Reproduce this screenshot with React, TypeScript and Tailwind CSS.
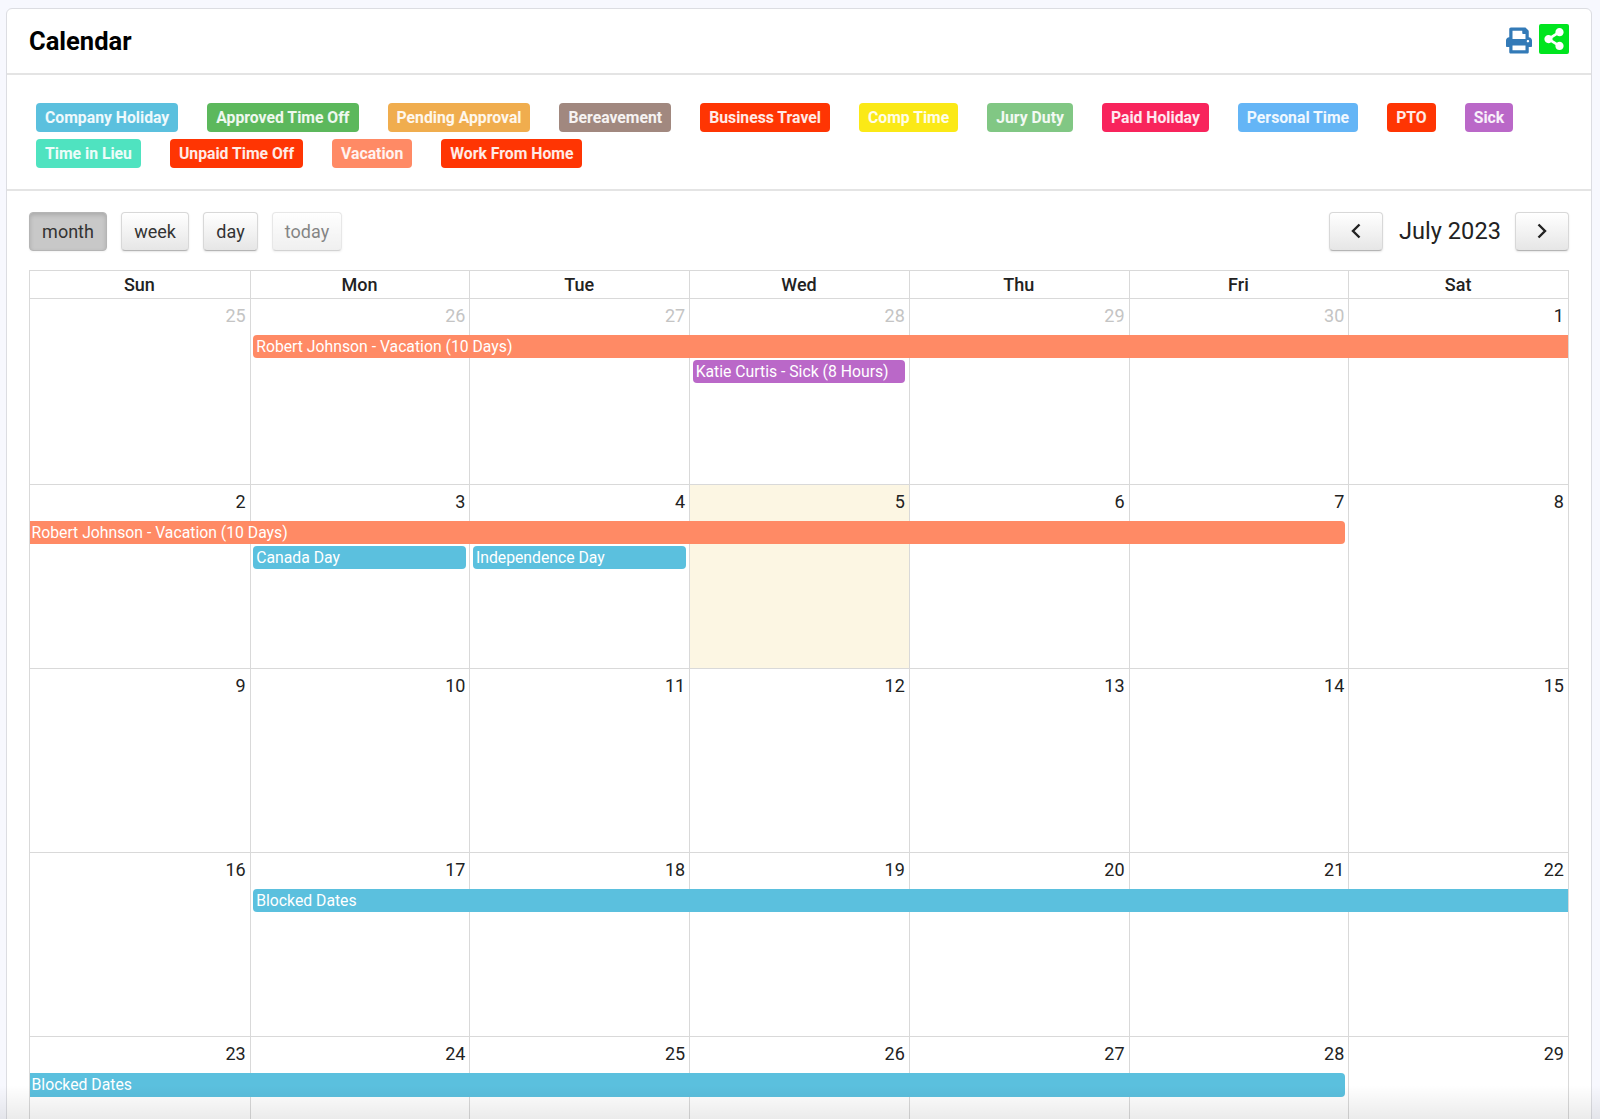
import React from "react";
import { FaPrint, FaShareAlt } from "react-icons/fa";

const legend: [string, string][] = [
  ["Company Holiday", "bg-[#5bc0de]"],
  ["Approved Time Off", "bg-[#5cb85c]"],
  ["Pending Approval", "bg-[#f0ad4e]"],
  ["Bereavement", "bg-[#a1887f]"],
  ["Business Travel", "bg-[#ff3503]"],
  ["Comp Time", "bg-[#fbe916]"],
  ["Jury Duty", "bg-[#81c784]"],
  ["Paid Holiday", "bg-[#f8245c]"],
  ["Personal Time", "bg-[#64b5f6]"],
  ["PTO", "bg-[#ff3503]"],
  ["Sick", "bg-[#ba68c8]"],
  ["Time in Lieu", "bg-[#4fe3c0]"],
  ["Unpaid Time Off", "bg-[#ff3503]"],
  ["Vacation", "bg-[#ff8a65]"],
  ["Work From Home", "bg-[#ff3503]"],
];

const days = ["Sun", "Mon", "Tue", "Wed", "Thu", "Fri", "Sat"];
const colStart = ["col-start-1", "col-start-2", "col-start-3", "col-start-4", "col-start-5", "col-start-6", "col-start-7"];

type Ev = { text: string; cls: string };

const btn =
  "h-[39px] rounded-[4px] border border-[#d8d8d8] border-b-[#b5b5b5] bg-gradient-to-b from-white to-[#e6e6e6] text-[18px] text-[#333] shadow-[0_1px_2px_rgba(0,0,0,0.1)] flex items-center justify-center";

function Week({ nums, muted = 0, today, events, h }: { nums: number[]; muted?: number; today?: number; events: Ev[]; h: string }) {
  return (
    <div className={`grid grid-cols-7 grid-rows-[36px_25px_25px_1fr] ${h} border-b border-[#d9d9d9]`}>
      {nums.map((n, i) => (
        <div
          key={`bg${i}`}
          className={`${colStart[i]} row-start-1 row-span-4 ${i > 0 ? "border-l border-[#d9d9d9]" : ""} ${i === today ? "bg-[#fcf6e3]" : ""}`}
        />
      ))}
      {nums.map((n, i) => (
        <div
          key={`n${i}`}
          className={`${colStart[i]} row-start-1 text-right pr-1 pt-[6px] text-[18px] leading-[22px] ${i < muted ? "text-[#c4c4c4]" : "text-[#222]"}`}
        >
          {n}
        </div>
      ))}
      {events.map((e) => (
        <div
          key={e.text + e.cls}
          className={`${e.cls} h-[23.5px] text-[15.75px] leading-[23px] text-white whitespace-nowrap overflow-hidden z-10`}
        >
          {e.text}
        </div>
      ))}
    </div>
  );
}

export default function App() {
  return (
    <div className="relative h-[1119px] overflow-hidden bg-[#f7f8fe] pt-[7.5px] pl-[6px] pr-[8px] font-['Roboto',sans-serif]">
      <div className="h-[1200px] rounded-t-[6px] border border-[#dcdde2] bg-white">
        <div className="h-[66px] border-b-2 border-[#e4e4e4] pl-[22px] pr-[22px] flex items-start justify-between">
          <h1 className="pt-[16px] text-[25.5px] leading-[32px] font-bold text-black">Calendar</h1>
          <div className="flex items-start gap-[7px] pt-[15px]">
            <FaPrint className="mt-[3px] w-[26px] h-[27px] text-[#337ab7]" />
            <div className="w-[30px] h-[30px] rounded-[2px] bg-[#00e51f] flex items-center justify-center">
              <FaShareAlt className="w-[22px] h-[22px] text-white" />
            </div>
          </div>
        </div>

        <div className="h-[116px] border-b-2 border-[#e4e4e4] pt-[28px] pl-[29px] pr-[22px] flex flex-wrap content-start gap-x-[29px] gap-y-[7px]">
          {legend.map(([name, cls]) => (
            <span
              key={name}
              className={`${cls} h-[29px] rounded-[4px] px-[9px] text-[15.75px] leading-[29px] font-bold text-white/90 whitespace-nowrap`}
            >
              {name}
            </span>
          ))}
        </div>

        <div className="px-[22px] pt-[21px]">
          <div className="flex justify-between">
            <div className="flex gap-[14px]">
              <button className="w-[78px] h-[39px] rounded-[4px] border border-[#b5b5b5] bg-[#c8c8c8] text-[18px] text-[#333] shadow-[inset_0_2px_4px_rgba(0,0,0,0.15),0_1px_2px_rgba(0,0,0,0.05)]">month</button>
              <button className={`${btn} w-[68px]`}>week</button>
              <button className={`${btn} w-[55px]`}>day</button>
              <button className={`${btn} w-[70px] opacity-60`}>today</button>
            </div>
            <div className="flex items-center">
              <button className={`${btn} w-[54px]`}>
                <svg width="12" height="18" viewBox="0 0 12 18" fill="none" stroke="#222" strokeWidth="2.4"><path d="M9.5 2.5 3 9l6.5 6.5" /></svg>
              </button>
              <h2 className="w-[132px] pl-[2px] text-center text-[23.6px] leading-[30px] text-[#222]">July 2023</h2>
              <button className={`${btn} w-[54px]`}>
                <svg width="12" height="18" viewBox="0 0 12 18" fill="none" stroke="#222" strokeWidth="2.4"><path d="M2.5 2.5 9 9l-6.5 6.5" /></svg>
              </button>
            </div>
          </div>

          <div className="mt-[19px] border-l border-r border-t border-[#d9d9d9]">
            <div className="grid grid-cols-7 h-[28px] border-b border-[#d9d9d9]">
              {days.map((d, i) => (
                <div key={d} className={`text-center pr-[1px] text-[18px] leading-[27px] font-medium text-[#222] ${i > 0 ? "border-l border-[#d9d9d9]" : ""}`}>
                  {d}
                </div>
              ))}
            </div>
            <Week
              h="h-[186px]"
              nums={[25, 26, 27, 28, 29, 30, 1]}
              muted={6}
              events={[
                { text: "Robert Johnson - Vacation (10 Days)", cls: "col-start-2 col-span-6 row-start-2 ml-[3.5px] pl-[3px] rounded-l-[4px] bg-[#ff8a65]" },
                { text: "Katie Curtis - Sick (8 Hours)", cls: "col-start-4 row-start-3 ml-[3.5px] mr-[3.5px] pl-[3px] rounded-[4px] bg-[#ba68c8]" },
              ]}
            />
            <Week
              h="h-[184.2px]"
              nums={[2, 3, 4, 5, 6, 7, 8]}
              today={3}
              events={[
                { text: "Robert Johnson - Vacation (10 Days)", cls: "col-start-1 col-span-6 row-start-2 mr-[3px] pl-[1.5px] rounded-r-[4px] bg-[#ff8a65]" },
                { text: "Canada Day", cls: "col-start-2 row-start-3 ml-[3.5px] mr-[3px] pl-[3px] rounded-[4px] bg-[#5bc0de]" },
                { text: "Independence Day", cls: "col-start-3 row-start-3 ml-[3.5px] mr-[3px] pl-[3px] rounded-[4px] bg-[#5bc0de]" },
              ]}
            />
            <Week h="h-[184.2px]" nums={[9, 10, 11, 12, 13, 14, 15]} events={[]} />
            <Week
              h="h-[184.2px]"
              nums={[16, 17, 18, 19, 20, 21, 22]}
              events={[{ text: "Blocked Dates", cls: "col-start-2 col-span-6 row-start-2 ml-[3.5px] pl-[3px] rounded-l-[4px] bg-[#5bc0de]" }]}
            />
            <Week
              h="h-[184.2px]"
              nums={[23, 24, 25, 26, 27, 28, 29]}
              events={[{ text: "Blocked Dates", cls: "col-start-1 col-span-6 row-start-2 mr-[3px] pl-[1.5px] rounded-r-[4px] bg-[#5bc0de]" }]}
            />
          </div>
        </div>
      </div>
      <div className="absolute inset-x-0 bottom-0 h-[34px] bg-gradient-to-b from-transparent to-[#00000014] z-20" />
    </div>
  );
}
